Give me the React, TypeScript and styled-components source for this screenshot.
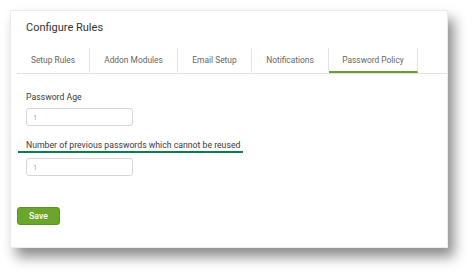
import React from "react";
import styled, { createGlobalStyle } from "styled-components";

const Global = createGlobalStyle`
  html, body { margin: 0; padding: 0; background: #fff; }
  body { font-family: Roboto, "Liberation Sans", sans-serif; }
`;

const Page = styled.div`
  width: 474px;
  height: 274px;
  padding: 10px 0 0 10px;
  box-sizing: border-box;
`;

const Card = styled.div`
  width: 438px;
  height: 238px;
  background: #fff;
  box-sizing: border-box;
  border: 1px solid #ececec;
  box-shadow: 6px 9px 12px rgba(0, 0, 0, 0.45);
  display: flex;
  flex-direction: column;
`;

const Title = styled.div`
  font-size: 11px;
  color: #333;
  padding: 10px 0 0 15px;
  height: 37px;
  box-sizing: border-box;
`;

const TabBar = styled.div`
  display: flex;
  margin-left: 6px;
  border-bottom: 1px solid #e2e2e2;
  height: 25px;
`;

const Tab = styled.div<{ $w: number; $active?: boolean }>`
  width: ${(p) => p.$w}px;
  box-sizing: border-box;
  display: flex;
  align-items: center;
  justify-content: center;
  font-size: 8.4px;
  color: #666;
  border-right: 1px solid #e2e2e2;
  border-bottom: ${(p) => (p.$active ? "2px solid #6a9d2c" : "2px solid transparent")};
`;

const Body = styled.div`
  padding: 18px 0 0 15px;
  display: flex;
  flex-direction: column;
  align-items: flex-start;
`;

const Label = styled.div`
  font-size: 8.7px;
  color: #3a3a3a;
`;

const MarkedLabel = styled(Label)`
  margin-left: -8px;
  padding: 0 3px 1px 8px;
  border-bottom: 2px solid #0f7a4c;
  margin-top: 14px;
`;

const Input = styled.div<{ $gap?: number }>`
  width: 107px;
  height: 18px;
  box-sizing: border-box;
  border: 1px solid #d6d6d6;
  border-radius: 3px;
  margin-top: ${(p) => p.$gap ?? 6}px;
  font-size: 7.5px;
  color: #aaa;
  padding-left: 6px;
  display: flex;
  align-items: center;
`;

const SaveButton = styled.button`
  margin: 31px 0 0 6px;
  width: 43px;
  height: 18px;
  background: #6aa62c;
  border: 1px solid #5c9424;
  border-radius: 3px;
  color: #fff;
  font-family: Roboto, "Liberation Sans", sans-serif;
  font-size: 8.7px;
  font-weight: 500;
  padding: 0;
`;

const tabs = [
  { label: "Setup Rules", w: 73 },
  { label: "Addon Modules", w: 88 },
  { label: "Email Setup", w: 74 },
  { label: "Notifications", w: 77 },
  { label: "Password Policy", w: 89, active: true },
];

export default function App() {
  return (
    <>
      <Global />
      <Page>
        <Card>
          <Title>Configure Rules</Title>
          <TabBar>
            {tabs.map((t) => (
              <Tab key={t.label} $w={t.w} $active={t.active}>
                {t.label}
              </Tab>
            ))}
          </TabBar>
          <Body>
            <Label>Password Age</Label>
            <Input>1</Input>
            <MarkedLabel>Number of previous passwords which cannot be reused</MarkedLabel>
            <Input $gap={5}>1</Input>
          </Body>
          <div>
            <SaveButton>Save</SaveButton>
          </div>
        </Card>
      </Page>
    </>
  );
}
